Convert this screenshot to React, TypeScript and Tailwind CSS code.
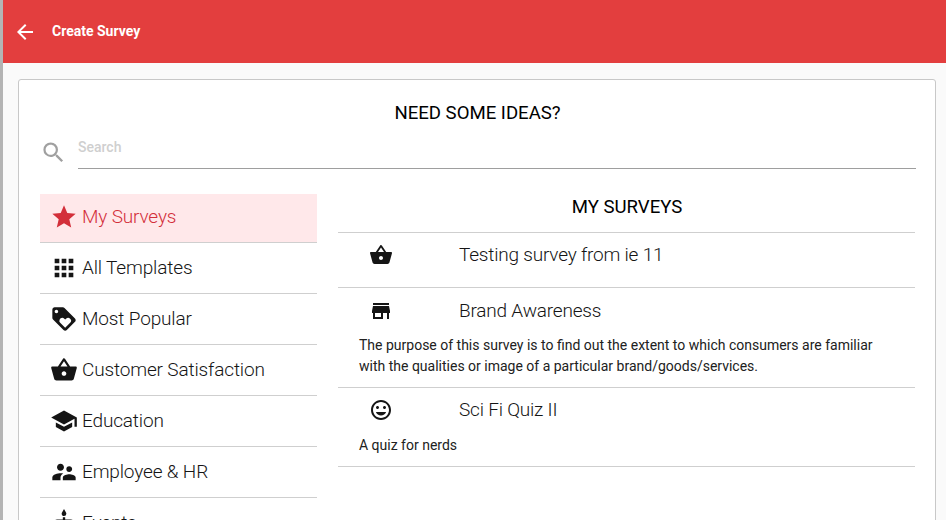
import {
  MdArrowBack,
  MdSearch,
  MdStar,
  MdApps,
  MdLoyalty,
  MdShoppingBasket,
  MdSchool,
  MdSupervisorAccount,
  MdCake,
  MdStore,
  MdTagFaces,
} from 'react-icons/md';
import type { IconType } from 'react-icons';

const categories: { label: string; icon: IconType; active?: boolean }[] = [
  { label: 'My Surveys', icon: MdStar, active: true },
  { label: 'All Templates', icon: MdApps },
  { label: 'Most Popular', icon: MdLoyalty },
  { label: 'Customer Satisfaction', icon: MdShoppingBasket },
  { label: 'Education', icon: MdSchool },
  { label: 'Employee & HR', icon: MdSupervisorAccount },
  { label: 'Events', icon: MdCake },
];

const surveys: { title: string; icon: IconType; description?: string[]; row: string; descTop?: string }[] = [
  { title: 'Testing survey from ie 11', icon: MdShoppingBasket, row: 'h-[55px] pt-[8px]' },
  {
    title: 'Brand Awareness',
    icon: MdStore,
    description: [
      'The purpose of this survey is to find out the extent to which consumers are familiar',
      'with the qualities or image of a particular brand/goods/services.',
    ],
    row: 'h-[100px] pt-[9px]',
    descTop: 'mt-[10px]',
  },
  {
    title: 'Sci Fi Quiz II',
    icon: MdTagFaces,
    description: ['A quiz for nerds'],
    row: 'h-[79px] pt-[8px]',
    descTop: 'mt-[11px]',
  },
];

export default function App() {
  return (
    <div className="h-[520px] w-[946px] overflow-hidden bg-[#fafafa] font-['Roboto',sans-serif] flex">
      <div className="w-[3px] shrink-0 bg-[#b4b4b4]" />
      <div className="flex-1 min-w-0">
        <header className="h-[63px] bg-[#e33e3e] flex items-center pl-[10px] text-white">
          <MdArrowBack className="w-[24px] h-[24px] shrink-0" />
          <span className="ml-[15px] text-[14px] font-bold">Create Survey</span>
        </header>

        <main className="ml-[15px] mt-[16px] w-[918px] h-[600px] bg-white border border-[#c8c8c8] rounded-[3px] pt-[21px]">
          <h1 className="text-center text-[18.6px] leading-[24px] text-black pl-[1px]">NEED SOME IDEAS?</h1>

          <div className="flex items-end mt-[8px] ml-[21px] mr-[19px]">
            <MdSearch className="w-[27px] h-[27px] text-[#a0a0a0] mb-[3px] shrink-0" />
            <div className="ml-[11px] flex-1 h-[36px] border-b border-[#9e9e9e] text-[14px] leading-[28px] font-medium text-[#cfcfcf]">
              Search
            </div>
          </div>

          <div className="flex mt-[25px] ml-[21px]">
            <nav className="w-[277px] shrink-0">
              {categories.map(({ label, icon: Icon, active }) => (
                <div
                  key={label}
                  className={`flex items-center pl-[11px] border-b border-[#cfcfcf] font-light text-[19px] ${
                    active ? 'h-[49px] pb-[2px] bg-[#ffe8ea] text-[#d32f3a]' : 'h-[51px] text-[#151515]'
                  }`}
                >
                  <Icon className="w-[28px] h-[28px] shrink-0 -ml-[1px]" />
                  <span className="ml-[4px] tracking-[-0.15px]">{label}</span>
                </div>
              ))}
            </nav>

            <section className="ml-[21px] w-[577px]">
              <h2 className="text-center text-[18.6px] leading-[24px] text-black mt-[1px] mb-[13px] pl-[1px]">MY SURVEYS</h2>
              <div className="border-t border-[#cfcfcf]">
                {surveys.map(({ title, icon: Icon, description, row, descTop }) => (
                  <div key={title} className={`${row} border-b border-[#cfcfcf]`}>
                    <div className="flex items-center h-[28px] text-[#151515]">
                      <Icon className="w-[24px] h-[24px] ml-[31px] shrink-0" />
                      <span className="ml-[66px] text-[19px] font-light tracking-[-0.2px]">{title}</span>
                    </div>
                    {description && (
                      <p className={`${descTop} ml-[21px] text-[14px] leading-[21px] text-[#212121]`}>
                        {description.map((line) => (
                          <span key={line} className="block">
                            {line}
                          </span>
                        ))}
                      </p>
                    )}
                  </div>
                ))}
              </div>
            </section>
          </div>
        </main>
      </div>
    </div>
  );
}
